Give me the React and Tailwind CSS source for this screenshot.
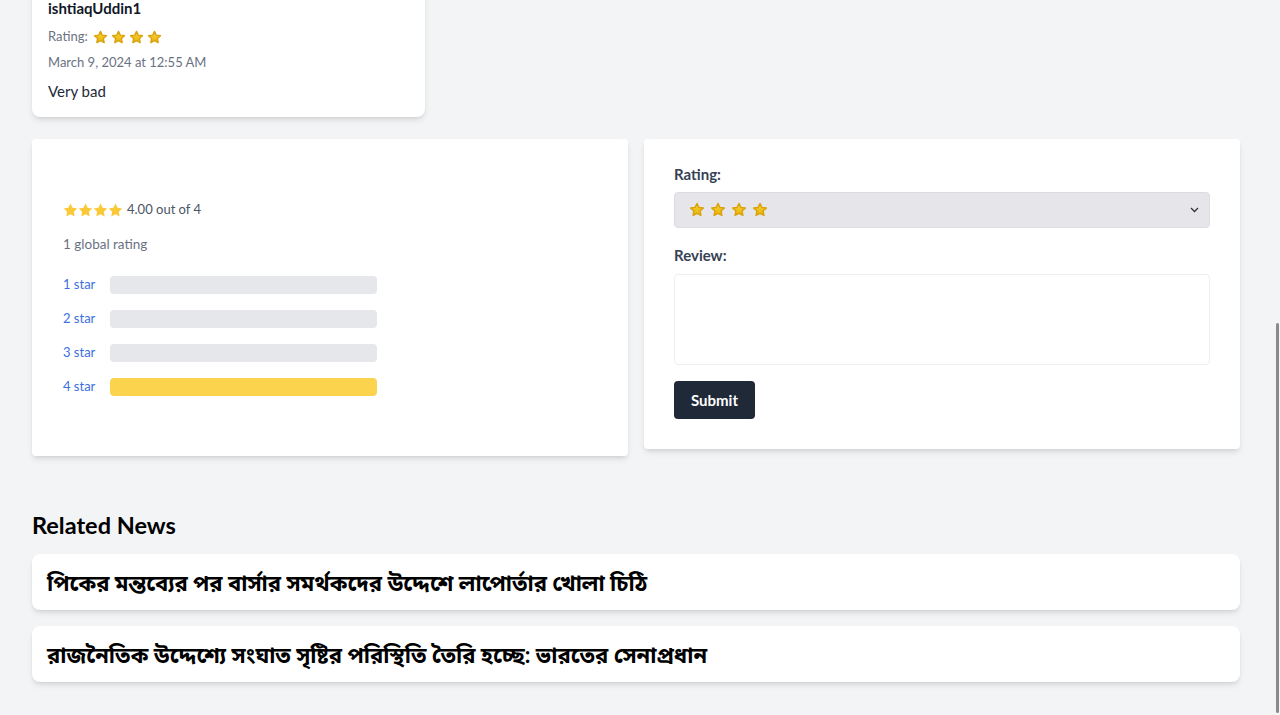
import React from "react";

const EmojiStar = ({ size = 15 }) => (
  <svg width={size} height={size} viewBox="0 0 24 24">
    <defs>
      <linearGradient id="eg" x1="0" y1="0" x2="0" y2="1">
        <stop offset="0" stopColor="#f8d23a" />
        <stop offset="1" stopColor="#eab308" />
      </linearGradient>
    </defs>
    <path
      d="M12 2.2l2.9 6.1 6.6.8-4.9 4.5 1.3 6.6L12 16.9l-5.9 3.3 1.3-6.6-4.9-4.5 6.6-.8z"
      fill="url(#eg)"
      stroke="#d9a20b"
      strokeWidth="2.2"
      strokeLinejoin="round"
    />
  </svg>
);

const FlatStar = () => (
  <svg width="15" height="14" viewBox="0 0 24 23">
    <path
      d="M12 .8l3.4 7 7.7 1.1-5.6 5.4 1.3 7.7L12 18.4 5.1 22l1.3-7.7L.9 8.9l7.7-1.1z"
      fill="#fbc937"
      strokeLinejoin="round"
    />
  </svg>
);

const bars = [
  { label: "1 star", pct: 0 },
  { label: "2 star", pct: 0 },
  { label: "3 star", pct: 0 },
  { label: "4 star", pct: 100 },
];

export default function App() {
  return (
    <div className="min-h-[715px] bg-[#f3f4f6] overflow-hidden" style={{ fontFamily: "Lato, 'Noto Sans Bengali', 'Noto Sans', sans-serif" }}>
      <div className="w-[1272px] px-8 pb-8">
        {/* Top review card */}
        <div className="mt-[-22px] w-[393px] rounded-lg bg-white px-4 pt-4 pb-[14px] shadow-md">
          <h3 className="text-[15px] font-bold leading-7 text-gray-900">ishtiaqUddin1</h3>
          <div className="mt-[5px] flex h-5 items-center gap-[3px] text-[13px] text-gray-500">
            <span className="mr-[2px]">Rating:</span>
            <EmojiStar />
            <EmojiStar />
            <EmojiStar />
            <EmojiStar />
          </div>
          <p className="mt-[5px] text-[13px] leading-5 text-gray-500">March 9, 2024 at 12:55 AM</p>
          <p className="mt-[7px] text-[15px] leading-6 text-gray-800">Very bad</p>
        </div>

        {/* Rating summary + form */}
        <div className="mt-[22px] grid grid-cols-2 items-start gap-4">
          <div className="rounded bg-white px-[31px] pt-8 pb-[60px] shadow-md">
            <div className="mt-[29px] flex h-5 items-center gap-[4px] text-[13px] text-gray-600">
              <span className="flex">
                <FlatStar />
                <FlatStar />
                <FlatStar />
                <FlatStar />
              </span>
              <span>4.00 out of 4</span>
            </div>
            <p className="mt-[14px] text-[13.5px] leading-5 text-gray-500">1 global rating</p>
            <div className="mt-[22px] flex flex-col gap-4">
              {bars.map((b) => (
                <div key={b.label} className="flex h-[18px] items-center">
                  <span className="w-[47px] text-[13px] text-[#3b6fe0]">{b.label}</span>
                  <div className="h-[18px] w-[267px] overflow-hidden rounded bg-[#e5e7eb]">
                    <div className="h-full rounded bg-[#fcd34d]" style={{ width: `${b.pct}%` }} />
                  </div>
                </div>
              ))}
            </div>
          </div>

          <div className="rounded bg-white px-[30px] pt-[25px] pb-[30px] shadow-md">
            <label className="block text-[15px] font-bold leading-5 text-gray-700">Rating:</label>
            <div className="mt-2 flex h-9 items-center justify-between rounded border border-[#dcdde2] bg-[#e6e6ea] pl-[14px] pr-[10px]">
              <div className="flex gap-[5px]">
                <EmojiStar size={16} />
                <EmojiStar size={16} />
                <EmojiStar size={16} />
                <EmojiStar size={16} />
              </div>
              <svg width="9" height="6" viewBox="0 0 9 6">
                <path d="M1 1l3.5 3.5L8 1" fill="none" stroke="#333" strokeWidth="1.3" />
              </svg>
            </div>
            <label className="mt-[17px] block text-[15px] font-bold leading-5 text-gray-700">Review:</label>
            <textarea className="mt-[9px] block h-[91px] w-full resize-none rounded border border-[#eceef1] bg-white" />
            <button className="mt-4 h-[38px] w-[81px] rounded bg-[#1f2937] text-[15px] font-bold text-white">Submit</button>
          </div>
        </div>

        {/* Related News */}
        <h2 className="mt-[55px] text-[23.5px] font-bold leading-7 text-black">Related News</h2>
        <div className="mt-[15px] flex flex-col gap-4">
          <div className="flex h-14 items-center rounded-lg bg-white px-[15px] shadow-md">
            <span className="text-[22px] font-bold text-black">পিকের মন্তব্যের পর বার্সার সমর্থকদের উদ্দেশে লাপোর্তার খোলা চিঠি</span>
          </div>
          <div className="flex h-14 items-center rounded-lg bg-white px-[15px] shadow-md">
            <span className="text-[22px] font-bold text-black">রাজনৈতিক উদ্দেশ্যে সংঘাত সৃষ্টির পরিস্থিতি তৈরি হচ্ছে: ভারতের সেনাপ্রধান</span>
          </div>
        </div>
      </div>
      <div className="fixed right-[1px] top-[323px] h-[390px] w-[3px] rounded-full bg-[#8a8a8a]" />
    </div>
  );
}
